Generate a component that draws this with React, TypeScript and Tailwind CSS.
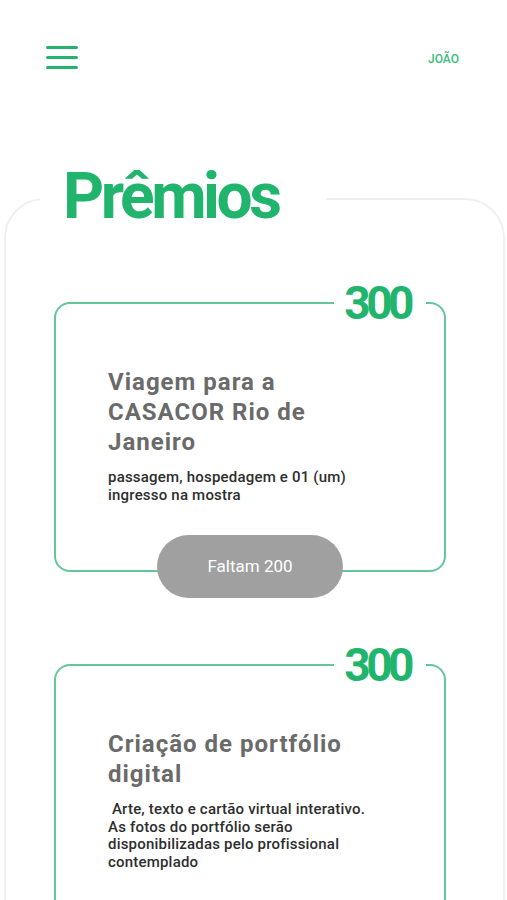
import React from 'react';

const prizes = [
  {
    id: 'casacor',
    points: 300,
    title: 'Viagem para a CASACOR Rio de Janeiro',
    description: 'passagem, hospedagem e 01 (um) ingresso na mostra',
    missing: 200,
  },
  {
    id: 'portfolio',
    points: 300,
    title: 'Criação de portfólio digital',
    description: '\u00a0Arte, texto e cartão virtual interativo. As fotos do portfólio serão disponibilizadas pelo profissional contemplado',
    missing: null,
  },
];

function PrizeCard({ prize }: { prize: (typeof prizes)[number] }) {
  return (
    <fieldset className="rounded-[16px] border-2 border-[#62c79a]">
      <legend className="ml-auto mr-[18px] pl-[10px] pr-[16px] text-[46px] font-bold leading-none tracking-[-4.5px] text-[#20b46c]">
        {prize.points}
      </legend>
      <div className="flex flex-col pl-[52px] pr-[70px] pt-[41px]">
        <h2 className="text-[24px] font-bold leading-[30px] tracking-[1px] text-[#6a6a6a]">
          {prize.title}
        </h2>
        <p className="mt-3 text-[15px] font-medium leading-[17.5px] tracking-[0.2px] text-[#2e2e2e]">
          {prize.description}
        </p>
      </div>
      {prize.missing !== null ? (
        <button className="mx-auto mt-[31px] -mb-[28px] flex h-[63px] w-[186px] items-center justify-center rounded-full bg-[#a0a0a0] text-[17px] text-white">
          Faltam {prize.missing}
        </button>
      ) : (
        <div className="h-[60px]" />
      )}
    </fieldset>
  );
}

export default function App() {
  return (
    <div className="min-h-screen bg-white font-['Roboto',sans-serif]">
      {/* Top bar */}
      <header className="flex items-center justify-between pl-[46px] pr-[48px] pt-[46px]">
        <button className="flex flex-col gap-[7px]" aria-label="Menu">
          <span className="block h-[3px] w-[32px] rounded-full bg-[#22b46d]" />
          <span className="block h-[3px] w-[32px] rounded-full bg-[#22b46d]" />
          <span className="block h-[3px] w-[32px] rounded-full bg-[#22b46d]" />
        </button>
        <span className="pt-[2px] text-[12px] font-medium text-[#3dbd80]">JOÃO</span>
      </header>

      {/* Prizes panel */}
      <fieldset className="ml-[4px] mr-[2px] mt-[96px] rounded-[40px] border-2 border-[#f0f0f0]">
        <legend className="ml-[34px] pb-[4px] pl-[23px] pr-[47px] text-[64px] font-bold leading-none tracking-[-3.5px] text-[#20b46c]">
          Prêmios
        </legend>
        <div className="flex flex-col gap-[70px] pl-[48px] pr-[57px] pt-[47px] pb-10">
          {prizes.map((p) => (
            <PrizeCard key={p.id} prize={p} />
          ))}
        </div>
      </fieldset>
    </div>
  );
}
